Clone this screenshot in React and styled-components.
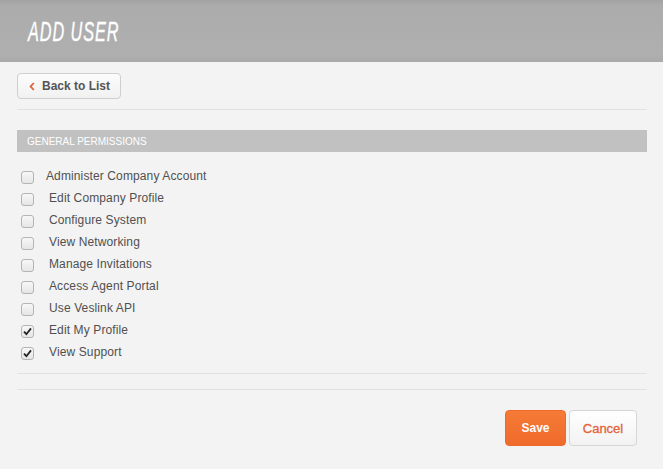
import React from "react";
import styled, { createGlobalStyle } from "styled-components";

const Global = createGlobalStyle`
  html, body { margin: 0; padding: 0; background: #f3f3f3; }
  body { font-family: "Liberation Sans", Arial, sans-serif; }
`;

const Page = styled.div`
  width: 663px;
  min-height: 469px;
  background: #f3f3f3;
`;

const Header = styled.header`
  height: 62px;
  background: linear-gradient(#a2a2a2 0px, #acacac 6px, #afafaf 55px, #a9a9a9 62px);
  display: flex;
  align-items: center;
  padding-left: 28px;
  box-sizing: border-box;
`;

const Title = styled.h1`
  margin: 0;
  margin-top: 1px;
  font-family: "Liberation Sans", Arial, sans-serif;
  font-style: italic;
  font-weight: 400;
  font-size: 28px;
  letter-spacing: 1.6px;
  color: #ffffff;
  -webkit-text-stroke: 0.4px #ffffff;
  transform: scaleX(0.58);
  transform-origin: left center;
  white-space: nowrap;
`;

const Content = styled.main`
  padding: 11px 16px 0 17px;
`;

const TopBar = styled.div`
  padding-bottom: 10px;
  border-bottom: 1px solid #e1e1e1;
`;

const BackButton = styled.button`
  display: inline-flex;
  align-items: center;
  gap: 7px;
  height: 26px;
  padding: 0 10px 0 11px;
  border: 1px solid #cfcfcf;
  border-radius: 4px;
  background: linear-gradient(#fcfcfc, #f1f1f1);
  font-family: "Liberation Sans", Arial, sans-serif;
  font-weight: 700;
  font-size: 12px;
  color: #555555;
  box-sizing: border-box;
  white-space: nowrap;
`;

const SectionHeading = styled.div`
  margin-top: 20px;
  height: 22px;
  background: #c1c1c1;
  color: #ffffff;
  font-size: 10px;
  text-transform: uppercase;
  display: flex;
  align-items: center;
  padding-left: 10px;
`;

const List = styled.ul`
  list-style: none;
  margin: 0;
  padding: 13px 0 10px 4px;
  border-bottom: 1px solid #e1e1e1;
`;

const Row = styled.li`
  height: 22px;
  display: flex;
  align-items: center;
  font-size: 12px;
  letter-spacing: 0.12px;
  color: #505050;
`;

const Box = styled.span`
  width: 11px;
  height: 11px;
  border: 1px solid #b4b4b4;
  border-radius: 3px;
  background: linear-gradient(#f7f7f7, #e6e6e6);
  display: inline-flex;
  align-items: center;
  justify-content: center;
  margin-top: 3px;
  margin-right: ${(p) => (p.$tight ? "12px" : "15px")};
`;

const Label = styled.span``;

const Footer = styled.div`
  margin-top: 15px;
  border-top: 1px solid #e1e1e1;
  padding-top: 20px;
  display: flex;
  justify-content: flex-end;
  gap: 3px;
  padding-right: 10px;
`;

const Btn = styled.button`
  height: 36px;
  border-radius: 4px;
  font-family: "Liberation Sans", Arial, sans-serif;
  font-weight: 700;
  font-size: 12px;
  box-sizing: border-box;
  padding: 0;
`;

const SaveBtn = styled(Btn)`
  width: 61px;
  border: 1px solid #ee6a2c;
  background: linear-gradient(#f57b36, #ef6a2b);
  color: #ffffff;
`;

const CancelBtn = styled(Btn)`
  width: 68px;
  border: 1px solid #d6d6d6;
  background: linear-gradient(#ffffff, #f2f2f2);
  color: #e4643a;
  font-size: 13px;
  font-weight: 400;
  -webkit-text-stroke: 0.3px #e4643a;
`;

const Check = () => (
  <svg width="9" height="9" viewBox="0 0 9 9">
    <path d="M1 4.6 L3.4 7.2 L8 1.4" fill="none" stroke="#222" strokeWidth="1.8" />
  </svg>
);

const perms = [
  ["Administer Company Account", false, true],
  ["Edit Company Profile", false],
  ["Configure System", false],
  ["View Networking", false],
  ["Manage Invitations", false],
  ["Access Agent Portal", false],
  ["Use Veslink API", false],
  ["Edit My Profile", true],
  ["View Support", true],
];

export default function App() {
  return (
    <Page>
      <Global />
      <Header>
        <Title>ADD USER</Title>
      </Header>
      <Content>
        <TopBar>
          <BackButton>
            <svg width="6" height="9" viewBox="0 0 6 9">
              <path d="M4.8 1 L1.6 4.5 L4.8 8" fill="none" stroke="#e0603a" strokeWidth="1.8" />
            </svg>
            Back to List
          </BackButton>
        </TopBar>
        <SectionHeading>General Permissions</SectionHeading>
        <List>
          {perms.map(([label, checked, tight]) => (
            <Row key={label}>
              <Box $tight={tight}>{checked && <Check />}</Box>
              <Label>{label}</Label>
            </Row>
          ))}
        </List>
        <Footer>
          <SaveBtn>Save</SaveBtn>
          <CancelBtn>Cancel</CancelBtn>
        </Footer>
      </Content>
    </Page>
  );
}
